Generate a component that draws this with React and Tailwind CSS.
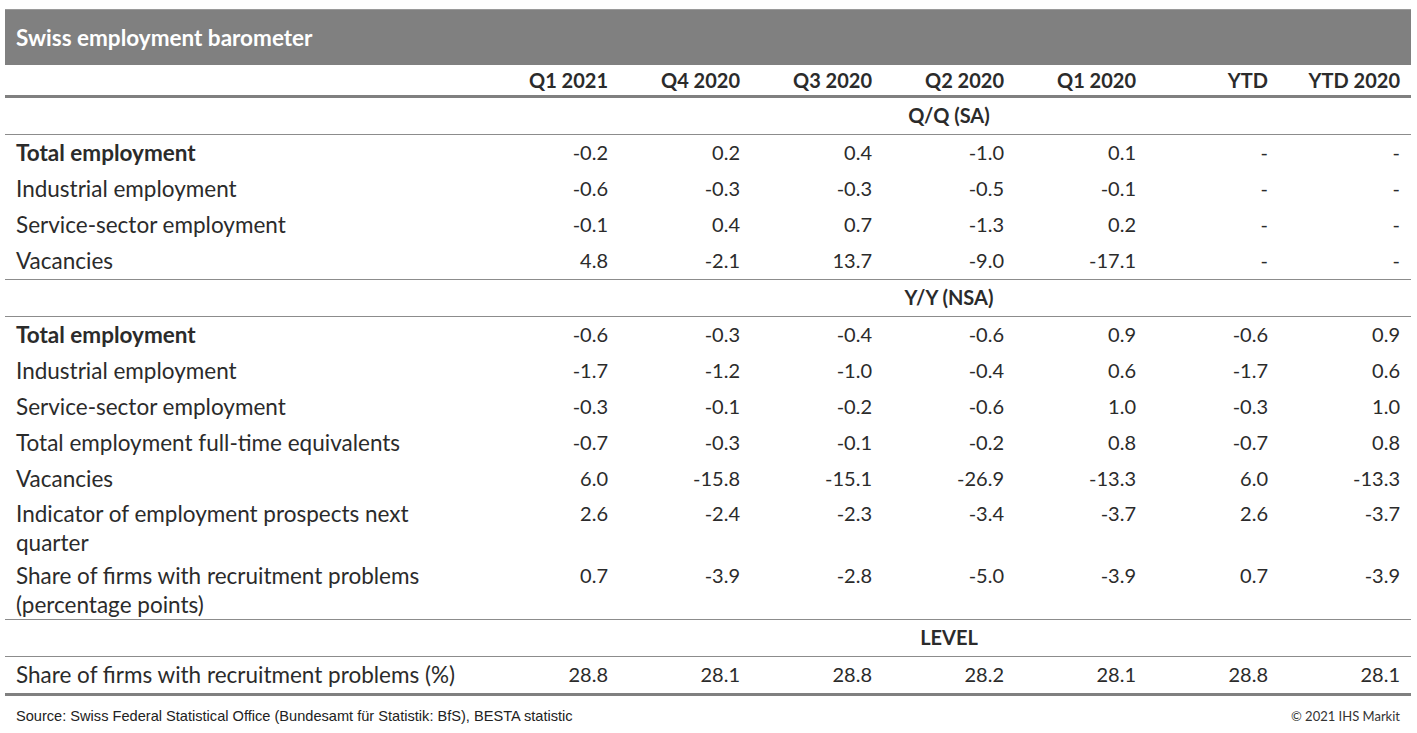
import React from "react";

const cols = ["Q1 2021", "Q4 2020", "Q3 2020", "Q2 2020", "Q1 2020", "YTD", "YTD 2020"];

const sections = [
  {
    title: "Q/Q (SA)",
    rows: [
      { label: "Total employment", bold: true, values: ["-0.2", "0.2", "0.4", "-1.0", "0.1", "-", "-"] },
      { label: "Industrial employment", values: ["-0.6", "-0.3", "-0.3", "-0.5", "-0.1", "-", "-"] },
      { label: "Service-sector employment", values: ["-0.1", "0.4", "0.7", "-1.3", "0.2", "-", "-"] },
      { label: "Vacancies", values: ["4.8", "-2.1", "13.7", "-9.0", "-17.1", "-", "-"] },
    ],
  },
  {
    title: "Y/Y (NSA)",
    rows: [
      { label: "Total employment", bold: true, values: ["-0.6", "-0.3", "-0.4", "-0.6", "0.9", "-0.6", "0.9"] },
      { label: "Industrial employment", values: ["-1.7", "-1.2", "-1.0", "-0.4", "0.6", "-1.7", "0.6"] },
      { label: "Service-sector employment", values: ["-0.3", "-0.1", "-0.2", "-0.6", "1.0", "-0.3", "1.0"] },
      { label: "Total employment full-time equivalents", values: ["-0.7", "-0.3", "-0.1", "-0.2", "0.8", "-0.7", "0.8"] },
      { label: "Vacancies", values: ["6.0", "-15.8", "-15.1", "-26.9", "-13.3", "6.0", "-13.3"] },
      {
        label: ["Indicator of employment prospects next", "quarter"],
        values: ["2.6", "-2.4", "-2.3", "-3.4", "-3.7", "2.6", "-3.7"],
        rowClass: "pt-[2px] pb-[4px]",
      },
      {
        label: ["Share of firms with recruitment problems", "(percentage points)"],
        values: ["0.7", "-3.9", "-2.8", "-5.0", "-3.9", "0.7", "-3.9"],
        rowClass: "pt-0 pb-0",
      },
    ],
  },
  {
    title: "LEVEL",
    rows: [
      { label: "Share of firms with recruitment problems (%)", values: ["28.8", "28.1", "28.8", "28.2", "28.1", "28.8", "28.1"] },
    ],
  },
];

const gridCols = "grid grid-cols-[482px_repeat(7,132px)]";

const DataRow = ({ row }) => {
  const multi = Array.isArray(row.label);
  return (
    <div className={`${gridCols} ${multi ? row.rowClass : "h-[36px] items-center pb-[2px]"} leading-[29px]`}>
      <div className={`pl-[11px] whitespace-nowrap text-[22.5px] ${row.bold ? "font-bold" : ""}`}>
        {multi ? (
          <>
            {row.label[0]}
            <br />
            {row.label[1]}
          </>
        ) : (
          row.label
        )}
      </div>
      {row.values.map((v, i) => (
        <div key={i} className="pr-[11px] text-right">
          {v}
        </div>
      ))}
    </div>
  );
};

export default function App() {
  return (
    <div className="min-h-screen bg-white pt-[9px] font-['Lato','Liberation_Sans',sans-serif] text-[20px] text-[#2b2b2b]">
      <div className="ml-[5px] w-[1406px]">
        {/* Title */}
        <div className="flex h-[56px] items-center bg-[#808080] pl-[11px] text-[22.5px] font-bold text-white border-t border-[#9a9a9a]">
          Swiss employment barometer
        </div>

        {/* Column headers */}
        <div className={`${gridCols} h-[33px] items-center font-bold border-b-[3px] border-[#808080]`}>
          <div />
          {cols.map((c) => (
            <div key={c} className="pr-[11px] text-right whitespace-nowrap">
              {c}
            </div>
          ))}
        </div>

        {sections.map((s, si) => (
          <div
            key={s.title}
            className={si === sections.length - 1 ? "border-b-[3px] border-[#808080]" : "border-b border-[#8c8c8c]"}
          >
            <div className={`${gridCols} h-[37px] items-center pb-[2px] border-b border-[#8c8c8c]`}>
              <div className="col-start-5 text-center whitespace-nowrap font-bold">{s.title}</div>
            </div>
            {s.rows.map((r, ri) => (
              <DataRow key={ri} row={r} />
            ))}
          </div>
        ))}

        {/* Footer */}
        <div className="mt-[10px] flex items-center justify-between px-[11px]">
          <span className="font-['Liberation_Sans',Arial,sans-serif] text-[14.6px] text-[#222]">
            Source: Swiss Federal Statistical Office (Bundesamt für Statistik: BfS), BESTA statistic
          </span>
          <span className="text-[13px] text-[#333]">© 2021 IHS Markit</span>
        </div>
      </div>
    </div>
  );
}
